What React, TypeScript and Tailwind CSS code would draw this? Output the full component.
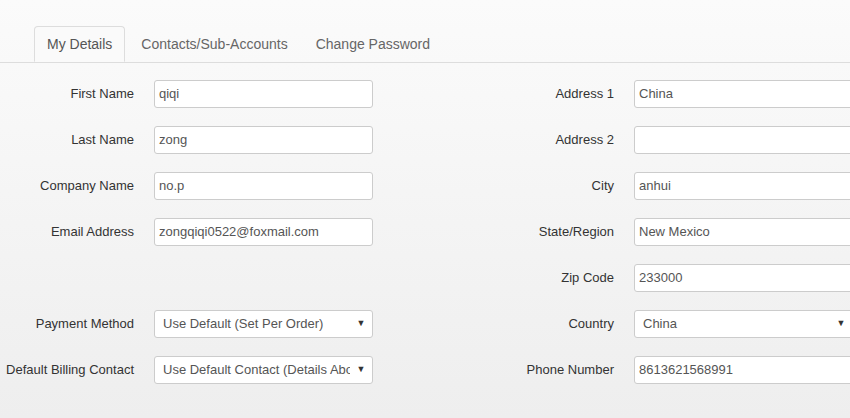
import React from "react";

type Field = { label: string; value?: string; select?: boolean } | null;

const left: Field[] = [
  { label: "First Name", value: "qiqi" },
  { label: "Last Name", value: "zong" },
  { label: "Company Name", value: "no.p" },
  { label: "Email Address", value: "zongqiqi0522@foxmail.com" },
  null,
  { label: "Payment Method", value: "Use Default (Set Per Order)", select: true },
  { label: "Default Billing Contact", value: "Use Default Contact (Details Above)", select: true },
];

const right: Field[] = [
  { label: "Address 1", value: "China" },
  { label: "Address 2", value: "" },
  { label: "City", value: "anhui" },
  { label: "State/Region", value: "New Mexico" },
  { label: "Zip Code", value: "233000" },
  { label: "Country", value: "China", select: true },
  { label: "Phone Number", value: "8613621568991" },
];

function Row({ f }: { f: Field }) {
  if (!f) return <div className="h-[28px]" />;
  return (
    <div className="flex items-center h-[28px]">
      <label className="w-[134px] shrink-0 text-right text-[13px] text-[#333] whitespace-nowrap">
        {f.label}
      </label>
      <div className="ml-[20px] w-[219px] h-[28px] bg-white border border-[#ccc] rounded-[3px] flex items-center">
        {f.select ? (
          <>
            <span className="ml-[8px] flex-1 min-w-0 overflow-hidden text-[13px] text-[#555] whitespace-nowrap">
              {f.value}
            </span>
            <span className="w-[22px] shrink-0 text-center text-[9px] text-[#333]">▼</span>
          </>
        ) : (
          <span className="pl-[4px] text-[13px] text-[#555] whitespace-nowrap">{f.value}</span>
        )}
      </div>
    </div>
  );
}

export default function App() {
  return (
    <div
      className="w-[850px] h-[418px] overflow-hidden bg-gradient-to-b from-[#fbfbfb] to-[#eeeeee]"
      style={{ fontFamily: '"Liberation Sans", Arial, sans-serif' }}
    >
      {/* Tabs */}
      <div className="pt-[26px] pl-[34px] border-b border-[#ddd] flex gap-[4px] text-[14px]">
        <div className="h-[36px] -mb-px px-[12px] flex items-center bg-[#fafafa] border border-[#ddd] border-b-transparent rounded-t-[4px] text-[#555]">
          My Details
        </div>
        <div className="h-[36px] px-[12px] flex items-center text-[#666]">Contacts/Sub-Accounts</div>
        <div className="h-[36px] px-[12px] flex items-center text-[#666]">Change Password</div>
      </div>

      {/* Form */}
      <div className="flex pt-[17px] w-[960px]">
        <div className="w-[480px] flex flex-col gap-[18px]">
          {left.map((f, i) => (
            <Row key={i} f={f} />
          ))}
        </div>
        <div className="w-[480px] flex flex-col gap-[18px]">
          {right.map((f, i) => (
            <Row key={i} f={f} />
          ))}
        </div>
      </div>
    </div>
  );
}
